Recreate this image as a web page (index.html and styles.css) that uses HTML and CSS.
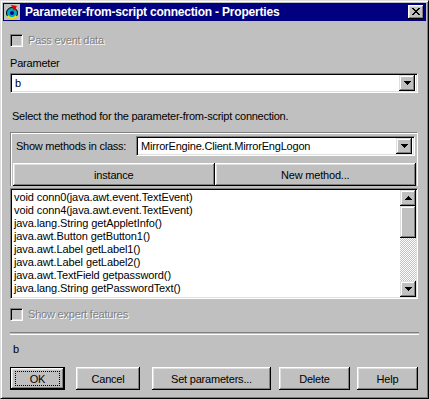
FILE: index.html
```html
<!DOCTYPE html>
<html lang="en">

<head>
  <meta charset="UTF-8">
  <meta name="viewport" content="width=device-width, initial-scale=1.0">
  <title>Parameter-from-script connection - Properties</title>
  <link rel="stylesheet" href="styles.css">
</head>

<body>
  <div class="window">
    <div class="titlebar">
      <svg class="app-icon" width="16" height="16" viewBox="0 0 16 16">
        <rect width="16" height="16" fill="#c0c0c0" />
        <circle cx="8" cy="9" r="5.5" fill="#00a8c8" stroke="#000" />
        <path d="M7 1 L13 2 L10 7 Z" fill="#e00000" />
        <path d="M3.5 12 Q8 16.5 12.5 12" fill="none" stroke="#f8e000" stroke-width="2" />
        <circle cx="8" cy="9" r="2" fill="#000080" />
      </svg>
      <span class="title">Parameter-from-script connection - Properties</span>
      <div class="close">
        <svg width="8" height="7" viewBox="0 0 8 7">
          <path d="M0 0h2v1H0zM6 0h2v1H6zM1 1h2v1H1zM5 1h2v1H5zM2 2h4v1H2zM3 3h2v1H3zM2 4h4v1H2zM1 5h2v1H1zM5 5h2v1H5zM0 6h2v1H0zM6 6h2v1H6z" fill="#000" />
        </svg>
      </div>
    </div>

    <div class="content">
      <div class="check check-pass disabled"><span class="box"></span>Pass event data</div>

      <div class="field-label">Parameter</div>
      <div class="combo">
        <span class="combo-value">b</span>
        <span class="drop">
          <svg width="7" height="4" viewBox="0 0 7 4"><path d="M0 0h7v1H0zM1 1h5v1H1zM2 2h3v1H2zM3 3h1v1H3z" fill="#000" /></svg>
        </span>
      </div>

      <div class="hint">Select the method for the parameter-from-script connection.</div>

      <div class="group">
        <div class="class-row">
          <span class="class-label">Show methods in class:</span>
          <div class="combo class-combo">
            <span class="combo-value">MirrorEngine.Client.MirrorEngLogon</span>
            <span class="drop">
              <svg width="7" height="4" viewBox="0 0 7 4"><path d="M0 0h7v1H0zM1 1h5v1H1zM2 2h3v1H2zM3 3h1v1H3z" fill="#000" /></svg>
            </span>
          </div>
        </div>
        <div class="split-buttons">
          <div class="btn">instance</div>
          <div class="btn">New method...</div>
        </div>
      </div>

      <div class="listbox">
        <ul class="items">
          <li>void conn0(java.awt.event.TextEvent)</li>
          <li>void conn4(java.awt.event.TextEvent)</li>
          <li>java.lang.String getAppletInfo()</li>
          <li>java.awt.Button getButton1()</li>
          <li>java.awt.Label getLabel1()</li>
          <li>java.awt.Label getLabel2()</li>
          <li>java.awt.TextField getpassword()</li>
          <li>java.lang.String getPasswordText()</li>
          <li>java.awt.TextField getusername()</li>
        </ul>
        <div class="scrollbar">
          <div class="sb-btn">
            <svg width="7" height="4" viewBox="0 0 7 4"><path d="M3 0h1v1H3zM2 1h3v1H2zM1 2h5v1H1zM0 3h7v1H0z" fill="#000" /></svg>
          </div>
          <div class="sb-thumb"></div>
          <div class="sb-track"></div>
          <div class="sb-btn">
            <svg width="7" height="4" viewBox="0 0 7 4"><path d="M0 0h7v1H0zM1 1h5v1H1zM2 2h3v1H2zM3 3h1v1H3z" fill="#000" /></svg>
          </div>
        </div>
      </div>

      <div class="check check-expert disabled"><span class="box"></span>Show expert features</div>

      <div class="separator"></div>

      <div class="status">b</div>

      <div class="buttons">
        <div class="btn btn-default btn-ok"><span class="focus">OK</span></div>
        <div class="btn btn-cancel">Cancel</div>
        <div class="btn btn-set">Set parameters...</div>
        <div class="btn btn-delete">Delete</div>
        <div class="btn btn-help">Help</div>
      </div>
    </div>
  </div>
</body>

</html>
```

FILE: styles.css
```css
body {
  margin: 0;
  padding: 0;
  font-family: 'Liberation Sans', Arial, sans-serif;
  font-size: 11px;
  color: #000;
  background: #c0c0c0;
}

.window {
  width: 429px;
  height: 399px;
  box-sizing: border-box;
  display: flex;
  flex-direction: column;
  padding: 2px;
  background: #c0c0c0;
  border: 1px solid;
  border-color: #dfdfdf #000 #000 #dfdfdf;
  box-shadow: inset 1px 1px #fff, inset -1px -1px #808080;
}

/* title bar */

.titlebar {
  height: 18px;
  display: flex;
  align-items: center;
  padding-left: 1px;
  background: #000080;
  color: #fff;
}

.app-icon {
  flex: none;
  margin-right: 5px;
}

.title {
  font-size: 12px;
  font-weight: bold;
  letter-spacing: -0.2px;
  white-space: nowrap;
}

.close {
  width: 16px;
  height: 14px;
  margin-left: auto;
  margin-right: 2px;
  box-sizing: border-box;
  display: flex;
  align-items: center;
  justify-content: center;
  padding: 0 0 1px 0;
  background: #c0c0c0;
  box-shadow: inset -1px -1px #000, inset 1px 1px #fff, inset -2px -2px #808080, inset 2px 2px #dfdfdf;
}

.close svg {
  display: block;
}

/* dialog body */

.content {
  display: flex;
  flex-direction: column;
  padding: 0 8px 0 7px;
  letter-spacing: -0.2px;
}

.check {
  height: 13px;
  line-height: 13px;
  display: flex;
  align-items: center;
  white-space: nowrap;
}

.check .box {
  width: 13px;
  height: 13px;
  box-sizing: border-box;
  margin-right: 5px;
  background: #c0c0c0;
  border: 1px solid;
  border-color: #808080 #fff #fff #808080;
  box-shadow: inset 1px 1px #000, inset -1px -1px #dfdfdf;
}

.check.disabled {
  color: #808080;
  text-shadow: 1px 1px #fff;
}

.check-pass {
  margin-top: 13px;
}

.field-label {
  margin-top: 10px;
  line-height: 13px;
}

.combo {
  height: 20px;
  box-sizing: border-box;
  display: flex;
  align-items: center;
  background: #fff;
  border: 1px solid;
  border-color: #808080 #fff #fff #808080;
  box-shadow: inset 1px 1px #000, inset -1px -1px #dfdfdf;
  padding: 2px 2px 2px 4px;
}

.content > .combo {
  margin-top: 3px;
}

.combo-value {
  flex: 1;
  white-space: nowrap;
  overflow: hidden;
}

.drop,
.sb-btn {
  width: 16px;
  height: 16px;
  box-sizing: border-box;
  display: flex;
  align-items: center;
  justify-content: center;
  background: #c0c0c0;
  box-shadow: inset -1px -1px #000, inset 1px 1px #dfdfdf, inset -2px -2px #808080, inset 2px 2px #fff;
}

.drop svg,
.sb-btn svg {
  display: block;
}

.hint {
  margin-top: 17px;
  padding-left: 2px;
  line-height: 13px;
  letter-spacing: -0.25px;
}

/* class selector group */

.group {
  margin-top: 9px;
  padding: 3px 1px 0 2px;
  border: 1px solid #808080;
  border-right-color: #fff;
  border-bottom: 0;
  box-shadow: inset 1px 1px #fff;
}

.class-row {
  display: flex;
  align-items: center;
}

.class-label {
  width: 120px;
  padding-left: 3px;
  white-space: nowrap;
  letter-spacing: -0.25px;
}

.class-combo {
  flex: 1;
  margin-right: 1px;
}

.split-buttons {
  display: flex;
  margin-top: 7px;
}

.split-buttons .btn {
  flex: 1;
}

.btn {
  height: 23px;
  box-sizing: border-box;
  display: flex;
  align-items: center;
  justify-content: center;
  white-space: nowrap;
  background: #c0c0c0;
  box-shadow: inset -1px -1px #000, inset 1px 1px #fff, inset -2px -2px #808080, inset 2px 2px #dfdfdf;
}

/* method list */

.listbox {
  margin-top: 2px;
  height: 111px;
  box-sizing: border-box;
  display: flex;
  background: #fff;
  border: 1px solid;
  border-color: #808080 #fff #fff #808080;
  box-shadow: inset 1px 1px #000, inset -1px -1px #dfdfdf;
  padding: 1px;
  overflow: hidden;
}

.items {
  flex: 1;
  list-style: none;
  margin: 0;
  padding: 1px 0 0 2px;
  line-height: 13px;
  letter-spacing: -0.1px;
  overflow: hidden;
  white-space: nowrap;
}

.scrollbar {
  width: 16px;
  display: flex;
  flex-direction: column;
}

.sb-thumb {
  height: 32px;
  background: #c0c0c0;
  box-shadow: inset -1px -1px #000, inset 1px 1px #dfdfdf, inset -2px -2px #808080, inset 2px 2px #fff;
}

.sb-track {
  flex: 1;
  background: repeating-conic-gradient(#c0c0c0 0 25%, #fff 0 50%) 0 0 / 2px 2px;
}

.check-expert {
  margin-top: 9px;
}

.separator {
  margin-top: 11px;
  margin-right: -1px;
  height: 1px;
  border-top: 1px solid #808080;
  border-bottom: 1px solid #fff;
}

.status {
  margin-top: 8px;
  padding-left: 3px;
  line-height: 13px;
}

/* bottom buttons */

.buttons {
  display: flex;
  margin-top: 11px;
}

.btn-default {
  border: 1px solid #000;
}

.btn-ok {
  width: 55px;
}

.btn-ok .focus {
  width: 45px;
  height: 15px;
  box-sizing: border-box;
  display: flex;
  align-items: center;
  justify-content: center;
  border: 1px dotted #000;
}

.btn-cancel {
  width: 64px;
  margin-left: 11px;
}

.btn-set {
  width: 119px;
  margin-left: 12px;
}

.btn-delete {
  width: 71px;
  margin-left: 8px;
}

.btn-help {
  width: 61px;
  margin-left: 7px;
}
```
